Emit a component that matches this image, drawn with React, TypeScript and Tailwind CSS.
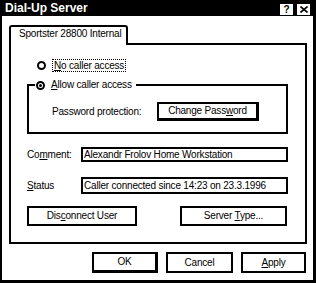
import React from "react";

function Radio({ checked }: { checked?: boolean }) {
  return (
    <span className="flex h-[9px] w-[9px] shrink-0 items-center justify-center rounded-full border-2 border-black bg-white">
      {checked && <span className="h-[3px] w-[3px] rounded-full bg-black" />}
    </span>
  );
}

function Btn({
  className,
  isDefault,
  children,
}: {
  className: string;
  isDefault?: boolean;
  children: React.ReactNode;
}) {
  return (
    <div
      className={`flex h-full shrink-0 items-center justify-center border-black bg-white ${
        isDefault ? "border-2 border-b-[3px] border-r-[3px]" : "border-2"
      } ${className}`}
    >
      {children}
    </div>
  );
}

const U = ({ children }: { children: React.ReactNode }) => (
  <span className="underline underline-offset-[1px]">{children}</span>
);

export default function App() {
  return (
    <div className="flex h-[283px] w-[316px] flex-col overflow-hidden border-b-[3px] border-l-2 border-r-[3px] border-black bg-white font-['Liberation_Sans',Arial,sans-serif] text-[10px] leading-[12px] tracking-[-0.2px] text-black">
      {/* Title bar */}
      <div className="flex h-[16px] shrink-0 items-start bg-black pr-[3px]">
        <span className="ml-[3px] mt-[2px] text-[12px] font-bold leading-[13px] tracking-normal text-white">
          Dial-Up Server
        </span>
        <div className="ml-auto mt-[4px] flex gap-[4px]">
          <span className="flex h-[11px] w-[13px] items-center justify-center bg-white text-[10px] font-bold leading-none tracking-normal">
            ?
          </span>
          <span className="flex h-[11px] w-[13px] items-center justify-center bg-white">
            <svg width="8" height="7" viewBox="0 0 8 7">
              <path d="M0.5 0.5 L7.5 6.5 M7.5 0.5 L0.5 6.5" stroke="black" strokeWidth="1.6" />
            </svg>
          </span>
        </div>
      </div>

      <div className="flex flex-col pl-[7px] pt-[9px]">
        {/* Tab */}
        <div className="relative z-10 -mb-[2px] h-[20px] w-[119px] rounded-t-[3px] border-2 border-b-0 border-black bg-white pl-[8px] pt-[1px]">
          Sportster 28800 Internal
        </div>

        {/* Panel */}
        <div className="flex h-[201px] w-[298px] flex-col border-2 border-black pl-[16px]">
          <div className="ml-[10px] mt-[14px] flex h-[13px] items-center gap-[6px]">
            <Radio />
            <span className="flex h-[13px] items-center border border-dotted border-black px-[1px] leading-[11px]">
              <U>N</U>o caller access
            </span>
          </div>

          {/* Group box */}
          <div className="relative mt-[12px] h-[50px] w-[261px] shrink-0 border-2 border-black">
            <div className="absolute -top-[7px] left-[6px] flex h-[12px] items-center gap-[6px] bg-white pl-[1px] pr-[4px]">
              <Radio checked />
              <span>
                <U>A</U>llow caller access
              </span>
            </div>
            <div className="mt-[16px] flex h-[19px] items-center pl-[23px]">
              <span className="w-[105px] shrink-0">Password protection:</span>
              <Btn className="w-[102px]" isDefault>
                <span>
                  Change Pass<U>w</U>ord
                </span>
              </Btn>
            </div>
          </div>

          <div className="mt-[13px] flex h-[15px] items-center">
            <span className="w-[54px] shrink-0">
              Co<U>m</U>ment:
            </span>
            <div className="flex h-full w-[207px] items-center border-2 border-black pl-[1px] leading-[11px]">
              Alexandr Frolov Home Workstation
            </div>
          </div>

          <div className="mt-[15px] flex h-[17px] items-center">
            <span className="w-[54px] shrink-0">
              <U>S</U>tatus
            </span>
            <div className="flex h-full w-[207px] items-center border-2 border-black pl-[1px] leading-[11px]">
              Caller connected since 14:23 on 23.3.1996
            </div>
          </div>

          <div className="mt-[12px] flex h-[20px]">
            <Btn className="w-[110px]">
              <span>
                Dis<U>c</U>onnect User
              </span>
            </Btn>
            <Btn className="ml-[43px] w-[107px]">
              <span>
                Server <U>T</U>ype...
              </span>
            </Btn>
          </div>
        </div>

        {/* Dialog buttons */}
        <div className="mt-[8px] flex h-[21px] justify-end gap-[8px] pr-[7px]">
          <Btn className="w-[66px]" isDefault>
            OK
          </Btn>
          <Btn className="w-[67px]">Cancel</Btn>
          <Btn className="w-[65px]">
            <span>
              <U>A</U>pply
            </span>
          </Btn>
        </div>
      </div>
    </div>
  );
}
